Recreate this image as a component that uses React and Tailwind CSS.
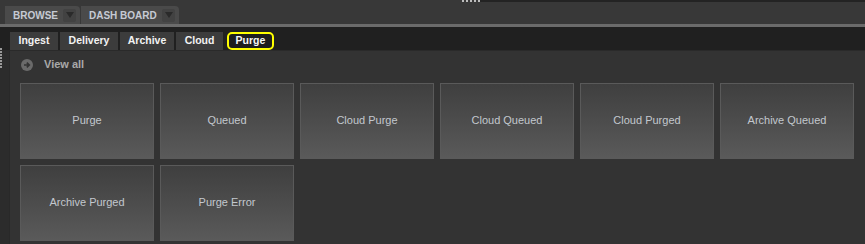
import React from 'react'

const TOP_TABS = [
  { label: 'BROWSE', w: 'w-[75px]' },
  { label: 'DASH BOARD', w: 'w-[98px]' },
]
const SUB_TABS = [
  { label: 'Ingest', w: 'w-[48px]' },
  { label: 'Delivery', w: 'w-[58px]' },
  { label: 'Archive', w: 'w-[54px]' },
  { label: 'Cloud', w: 'w-[47px]' },
]
const TILES = [
  'Purge',
  'Queued',
  'Cloud Purge',
  'Cloud Queued',
  'Cloud Purged',
  'Archive Queued',
  'Archive Purged',
  'Purge Error',
]

function Caret() {
  return (
    <span className="flex h-[13px] w-[13px] items-center justify-center rounded-[2px] bg-[#424242]">
      <svg width="8" height="6" viewBox="0 0 8 6">
        <path d="M0 0h8L4 6z" fill="#2a2a2a" />
      </svg>
    </span>
  )
}

function ViewAllIcon() {
  return (
    <svg width="12" height="12" viewBox="0 0 12 12">
      <circle cx="6" cy="6" r="6" fill="#6a6a6a" />
      <path d="M3 6h5M5.8 3.6L8.3 6 5.8 8.4" stroke="#333" strokeWidth="1.6" fill="none" />
    </svg>
  )
}

export default function App() {
  return (
    <div className="relative h-[244px] w-[865px] overflow-hidden bg-[#333333] font-['Liberation_Sans',Arial,sans-serif]">
      {/* top tab bar */}
      <div className="relative h-[24px] bg-[#383838]">
        <div className="absolute right-0 top-0 h-[2px] w-[385px] bg-[#232323]" />
        <div className="absolute left-[462px] top-0 flex gap-[2px]">
          {[0, 1, 2, 3, 4].map((i) => (
            <span key={i} className="h-[2px] w-[2px] bg-[#bdbdbd]" />
          ))}
        </div>
        <div className="flex gap-[1px] pl-[5px] pt-[6px]">
          {TOP_TABS.map((t) => (
            <div
              key={t.label}
              className={`flex h-[18px] ${t.w} items-center justify-between rounded-tr-[4px] bg-[#4a4a4a] pl-[8px] pr-[4px] text-[10px] font-bold text-[#c6cad4]`}
            >
              <span>{t.label}</span>
              <Caret />
            </div>
          ))}
        </div>
      </div>
      <div className="h-[3px] bg-[#6b6b6b]" />

      {/* sub tabs */}
      <div className="flex h-[23px] items-end gap-[2px] bg-[#202020] pl-[10px]">
        {SUB_TABS.map((t) => (
          <div
            key={t.label}
            className={`flex h-[18px] ${t.w} items-center justify-center bg-[#3c3c3c] text-[10.5px] font-bold text-[#f2f2f2]`}
          >
            {t.label}
          </div>
        ))}
        <div className="ml-[2px] flex h-[18px] w-[47px] items-center justify-center rounded-[5px] border-2 border-[#ffff00] bg-[#1e1e1e] text-[10.5px] font-bold text-[#f6f6f6]">
          Purge
        </div>
      </div>

      {/* body */}
      <div className="flex h-[194px] border-t border-[#2a2a2a]">
        <div className="relative w-[10px] border-r border-[#292929] bg-[#2c2c2c]">
          <div className="absolute left-0 top-[-3px] flex flex-col gap-[1px]">
            {[0, 1, 2, 3, 4, 5, 6].map((i) => (
              <span key={i} className="h-[2px] w-[2px] bg-[#9a9a9a]" />
            ))}
          </div>
        </div>
        <div className="flex-1">
          <div className="mt-[7px] flex h-[13px] items-center gap-[11px] pl-[11px]">
            <ViewAllIcon />
            <span className="text-[11px] font-bold text-[#a9a9a9]">View all</span>
          </div>
          <div className="ml-[10px] mt-[12px] grid grid-cols-[repeat(6,134px)] auto-rows-[76px] gap-[6px]">
            {TILES.map((t) => (
              <div
                key={t}
                className="flex items-center justify-center border border-[#5a5a5a] bg-linear-to-b from-[#3f3f3f] to-[#5a5a5a] pb-[2px] text-[11px] text-[#c3c8ce]"
              >
                {t}
              </div>
            ))}
          </div>
        </div>
      </div>
    </div>
  )
}
